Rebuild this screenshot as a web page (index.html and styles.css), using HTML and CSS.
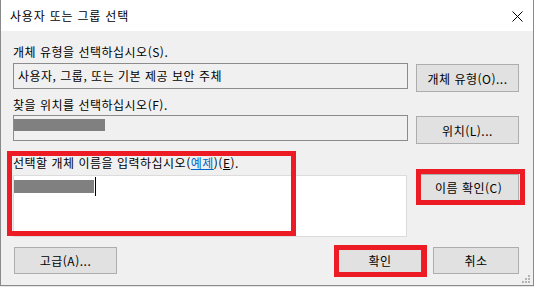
FILE: index.html
```html
<!DOCTYPE html>
<html lang="ko">
<head>
    <meta charset="UTF-8">
    <title>사용자 또는 그룹 선택</title>
    <link rel="stylesheet" href="styles.css">
</head>
<body>
    <div class="dialog">
        <div class="titlebar">
            <span class="title">사용자 또는 그룹 선택</span>
            <svg class="close" width="11" height="11" viewBox="0 0 11 11">
                <path d="M0.5 0.5 L10.5 10.5 M10.5 0.5 L0.5 10.5" stroke="#000" stroke-width="1" fill="none"/>
            </svg>
        </div>

        <div class="content">
            <div class="label">개체 유형을 선택하십시오(S).</div>
            <div class="row">
                <div class="field readonly">사용자, 그룹, 또는 기본 제공 보안 주체</div>
                <button class="btn side">개체 유형(O)...</button>
            </div>

            <div class="label second">찾을 위치를 선택하십시오(F).</div>
            <div class="row tight">
                <div class="field readonly"><span class="redact loc"></span></div>
                <button class="btn side">위치(L)...</button>
            </div>

            <div class="label third">선택할 개체 이름을 입력하십시오(<a class="link">예제</a>)(<u>E</u>).</div>
            <div class="row names">
                <div class="names-box"><span class="redact name"></span><span class="caret"></span></div>
                <button class="btn check">이름 확인(C)</button>
            </div>

            <div class="row footer">
                <button class="btn advanced">고급(A)...</button>
                <div class="footer-right">
                    <button class="btn small default">확인</button>
                    <button class="btn small">취소</button>
                </div>
            </div>
        </div>

        <!-- red highlight boxes drawn over the dialog -->
        <div class="mark mark-names"></div>
        <div class="mark mark-check"></div>
        <div class="mark mark-ok"></div>

        <svg class="grip" width="10" height="10" viewBox="0 0 10 10">
            <rect x="7" y="1" width="2" height="2" fill="#b4b4b4"/>
            <rect x="4" y="4" width="2" height="2" fill="#b4b4b4"/>
            <rect x="7" y="4" width="2" height="2" fill="#b4b4b4"/>
            <rect x="1" y="7" width="2" height="2" fill="#b4b4b4"/>
            <rect x="4" y="7" width="2" height="2" fill="#b4b4b4"/>
            <rect x="7" y="7" width="2" height="2" fill="#b4b4b4"/>
        </svg>
    </div>
</body>
</html>
```

FILE: styles.css
```css
body {
    margin: 0;
    background-color: #e6e6e6;
}
.dialog {
    position: relative;
    width: 534px;
    height: 286px;
    box-sizing: border-box;
    border: 1px solid #8a8a8a;
    border-top: none;
    background-color: #f0f0f0;
    font-family: "Noto Sans CJK KR", "Noto Sans", sans-serif;
    font-size: 12px;
    letter-spacing: 0.5px;
    color: #000;
    overflow: hidden;
}
.titlebar {
    height: 31px;
    background-color: #fff;
    display: flex;
    align-items: center;
    justify-content: space-between;
    padding: 0 10px 0 9px;
}
.title {
    letter-spacing: 0.8px;
}
.close {
    margin-top: 1px;
}
.content {
    padding: 13px 14px 0 12px;
}
.label {
    height: 16px;
    line-height: 16px;
    white-space: nowrap;
}
.label.second {
    margin-top: 5px;
}
.label.third {
    margin-top: 11px;
}
.link {
    color: #0066cc;
    text-decoration: underline;
}
.row {
    display: flex;
    align-items: flex-start;
    margin-top: 3px;
}
.row.tight {
    margin-top: 2px;
}
.row.names {
    margin-top: 4px;
}
.field {
    width: 395px;
    height: 26px;
    box-sizing: border-box;
    border: 1px solid #8c8c8c;
    line-height: 24px;
    padding-left: 4px;
    white-space: nowrap;
}
.field.readonly {
    background-color: #f0f0f0;
}
.redact {
    display: block;
    background-color: #808080;
}
.redact.loc {
    width: 91px;
    height: 12px;
    margin: 3px 0 0 -4px;
}
.names-box {
    width: 395px;
    height: 62px;
    box-sizing: border-box;
    border: 1px solid #dcdcdc;
    background-color: #fff;
    display: flex;
    align-items: flex-start;
}
.redact.name {
    width: 80px;
    height: 13px;
    margin-top: 4px;
}
.caret {
    width: 1px;
    height: 19px;
    margin: 1px 0 0 1px;
    background-color: #000;
}
.btn {
    box-sizing: border-box;
    border: 1px solid #adadad;
    background-color: #e1e1e1;
    font: inherit;
    letter-spacing: inherit;
    color: #000;
    padding: 0;
}
.btn.side {
    width: 103px;
    height: 28px;
    margin: 1px 0 0 8px;
}
.btn.check {
    width: 101px;
    height: 27px;
    margin: -1px 0 0 11px;
}
.row.footer {
    margin-top: 10px;
    justify-content: space-between;
}
.btn.advanced {
    width: 103px;
    height: 27px;
    margin-left: 1px;
}
.footer-right {
    display: flex;
    gap: 10px;
}
.btn.small {
    width: 86px;
    height: 27px;
}
.btn.default {
    border: 2px solid #0078d7;
}
.mark {
    position: absolute;
    box-sizing: border-box;
    border: 5px solid #ed1c24;
}
.mark-names {
    left: 6px;
    top: 151px;
    width: 289px;
    height: 85px;
}
.mark-check {
    left: 415px;
    top: 169px;
    width: 109px;
    height: 36px;
}
.mark-ok {
    left: 333px;
    top: 245px;
    width: 93px;
    height: 32px;
}
.grip {
    position: absolute;
    right: 2px;
    bottom: 1px;
}
```
